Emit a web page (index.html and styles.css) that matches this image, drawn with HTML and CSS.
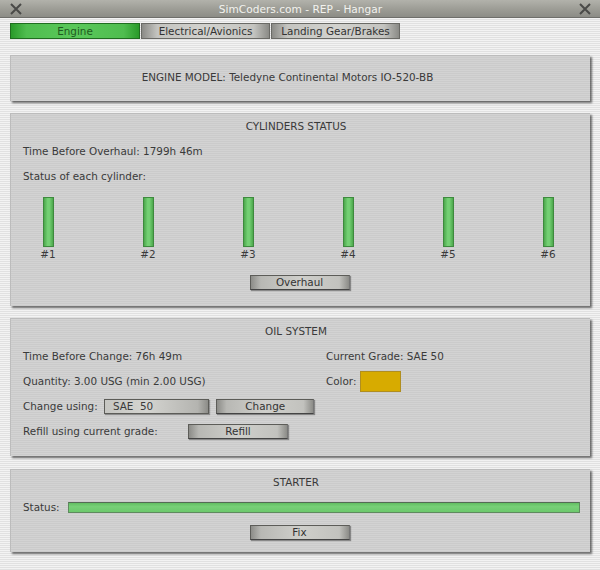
FILE: index.html
```html
<!DOCTYPE html>
<html>
<head>
<meta charset="utf-8">
<link rel="stylesheet" href="styles.css">
</head>
<body>
<div class="titlebar">
  <svg class="xicon" width="12" height="12" viewBox="0 0 12 12"><path d="M1 1L11 11M11 1L1 11" stroke="#4a4a48" stroke-width="2"/></svg>
  <span class="title">SimCoders.com - REP - Hangar</span>
  <svg class="xicon" width="12" height="12" viewBox="0 0 12 12"><path d="M1 1L11 11M11 1L1 11" stroke="#4a4a48" stroke-width="2"/></svg>
</div>
<div class="tabs">
  <div class="tab active">Engine</div>
  <div class="tab">Electrical/Avionics</div>
  <div class="tab">Landing Gear/Brakes</div>
</div>

<div class="panel model">ENGINE MODEL: Teledyne Continental Motors IO-520-BB</div>

<div class="panel cyl">
  <div class="row center">CYLINDERS STATUS</div>
  <div class="row">Time Before Overhaul: 1799h 46m</div>
  <div class="row">Status of each cylinder:</div>
  <div class="cyls">
    <div class="cyl-item"><div class="cbar"></div><span>#1</span></div>
    <div class="cyl-item"><div class="cbar"></div><span>#2</span></div>
    <div class="cyl-item"><div class="cbar"></div><span>#3</span></div>
    <div class="cyl-item"><div class="cbar"></div><span>#4</span></div>
    <div class="cyl-item"><div class="cbar"></div><span>#5</span></div>
    <div class="cyl-item"><div class="cbar"></div><span>#6</span></div>
  </div>
  <div class="btnrow"><div class="btn">Overhaul</div></div>
</div>

<div class="panel oil">
  <div class="row center">OIL SYSTEM</div>
  <div class="oilgrid">
    <div class="row">Time Before Change: 76h 49m</div>
    <div class="row">Current Grade: SAE 50</div>
    <div class="row">Quantity: 3.00 USG (min 2.00 USG)</div>
    <div class="row"><span class="lbl lbl-color">Color:</span><span class="swatch"></span></div>
    <div class="row"><span class="lbl lbl-change">Change using:</span><span class="select">SAE&nbsp;&nbsp;50</span><span class="btn change">Change</span></div>
    <div class="row"></div>
    <div class="row"><span class="lbl lbl-refill">Refill using current grade:</span><span class="btn">Refill</span></div>
  </div>
</div>

<div class="panel starter">
  <div class="row center">STARTER</div>
  <div class="row"><span class="lbl lbl-status">Status:</span><span class="sbar"></span></div>
  <div class="row btnline"><span class="btn">Fix</span></div>
</div>
</body>
</html>
```
FILE: styles.css
```css
html, body {
  margin: 0;
  padding: 0;
}
body {
  width: 600px;
  height: 570px;
  overflow: hidden;
  font-family: "DejaVu Sans", sans-serif;
  font-size: 10.4px;
  color: #3a3a3a;
  background: repeating-linear-gradient(to bottom, #f3f3f3 0px, #f3f3f3 1px, #e1e1e1 1px, #e1e1e1 2px);
}
.titlebar {
  height: 18px;
  box-sizing: border-box;
  display: flex;
  align-items: center;
  justify-content: space-between;
  padding: 0 9px 0 10px;
  background: linear-gradient(to bottom, #b2b2ab, #9a9a93 60%, #8c8c86);
  border-bottom: 1px solid #6e6e6a;
}
.title {
  color: #f2f2ee;
  font-size: 10.6px;
}
.xicon { display: block; }
.tabs {
  display: flex;
  margin: 5px 0 0 10px;
  height: 16px;
}
.tab {
  box-sizing: border-box;
  width: 129px;
  height: 16px;
  line-height: 14px;
  text-align: center;
  border: 1px solid #6a6a66;
  background: linear-gradient(to right, #8a8a86 0%, #c4c4c0 12%, #d2d2ce 50%, #c4c4c0 88%, #8a8a86 100%);
  color: #333;
}
.tab + .tab { margin-left: 1px; }
.tab.active {
  width: 130px;
  border: 1px solid #1f6e1f;
  background: linear-gradient(to right, #2a9a2a 0%, #4fbd4f 12%, #5ac85a 50%, #4fbd4f 88%, #2a9a2a 100%);
  color: #1f5a1f;
}
.panel {
  box-sizing: border-box;
  width: 580px;
  margin-left: 10px;
  background: repeating-linear-gradient(to bottom, #d3d3d3 0px, #d3d3d3 1px, #cbcbcb 1px, #cbcbcb 2px);
  border-top: 1px solid #bcbcbc;
  border-left: 1px solid #bcbcbc;
  box-shadow: 2px 2px 2px rgba(0,0,0,0.55);
}
.model {
  margin-top: 16px;
  height: 46px;
  line-height: 42px;
  text-align: center;
  padding-right: 26px;
}
.row {
  height: 25px;
  line-height: 25px;
  padding-left: 12px;
  white-space: nowrap;
  display: flex;
  align-items: center;
}
.row.center {
  justify-content: center;
  padding-left: 0;
  padding-right: 9px;
}
.lbl { display: inline-block; }
.lbl-color { width: 34px; }
.lbl-change { width: 83px; }
.lbl-refill { width: 165px; }
.lbl-status { width: 45px; }
.cyl {
  margin-top: 12px;
  height: 193px;
}
.cyls {
  display: flex;
  justify-content: space-between;
  padding: 0 32px 0 27px;
  margin-top: 8px;
}
.cyl-item {
  width: 20px;
  display: flex;
  flex-direction: column;
  align-items: center;
}
.cbar {
  box-sizing: border-box;
  width: 11px;
  height: 50px;
  border: 1px solid #3e8a3e;
  background: linear-gradient(to right, #4da84d, #74d074 40%, #74d074 60%, #4da84d);
}
.cyl-item span {
  line-height: 15px;
  height: 14px;
}
.btnrow {
  display: flex;
  justify-content: center;
  margin-top: 14px;
  padding-right: 2px;
}
.btn {
  box-sizing: border-box;
  display: inline-block;
  width: 100px;
  height: 15px;
  line-height: 13px;
  text-align: center;
  border: 1px solid #5c5c58;
  border-right-color: #777;
  border-bottom-color: #444;
  background: linear-gradient(to right, #8c8c88 0%, #b8b8b4 10%, #cfcfcb 50%, #c2c2be 90%, #8c8c88 100%);
  box-shadow: 1px 1px 1px rgba(0,0,0,0.35);
  color: #333;
}
.oil {
  margin-top: 12px;
  height: 138px;
}
.oilgrid {
  display: grid;
  grid-template-columns: 303px 1fr;
}
.swatch {
  display: inline-block;
  box-sizing: border-box;
  width: 41px;
  height: 21px;
  background: #d7ab00;
  border: 1px solid #b08e20;
}
.select {
  box-sizing: border-box;
  display: inline-block;
  width: 108px;
  height: 15px;
  line-height: 13px;
  padding-left: 8px;
  border: 1px solid #5c5c58;
  background: linear-gradient(to right, #c6c6c2 0%, #d4d4d0 40%, #b4b4b0 90%, #8c8c88 100%);
  box-shadow: 1px 1px 1px rgba(0,0,0,0.3);
}
.btn.change { margin-left: 7px; }
.starter {
  margin-top: 13px;
  height: 83px;
}
.sbar {
  display: inline-block;
  box-sizing: border-box;
  width: 512px;
  height: 11px;
  border: 1px solid #5e8a5e;
  border-top-color: #556b55;
  background: linear-gradient(to bottom, #62bf62, #78d078 40%, #6cc86c);
}
.btnline {
  justify-content: center;
  padding-left: 0;
  padding-right: 2px;
}
```
